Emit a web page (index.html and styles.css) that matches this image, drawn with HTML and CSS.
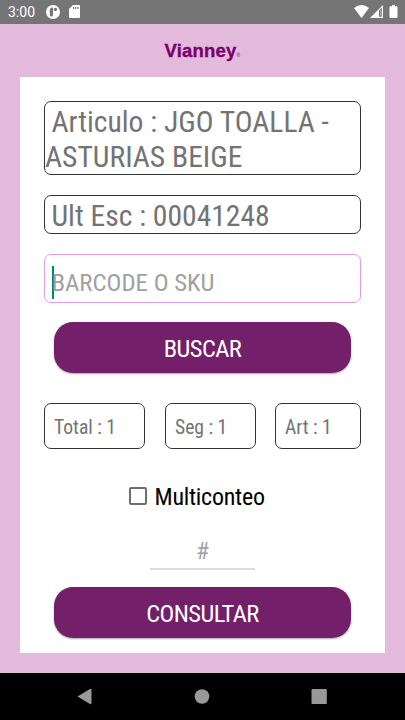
FILE: index.html
```
<!DOCTYPE html>
<html lang="es">
<head>
<meta charset="utf-8">
<meta name="viewport" content="width=device-width">
<title>Vianney</title>
<link rel="stylesheet" href="styles.css">
</head>
<body>
<header class="status">
  <span class="clock">3:00</span>
  <svg class="app" viewBox="0 0 14 14"><circle cx="7" cy="7" r="7" fill="#fff"/><path d="M7 2.500H5.700Q3.800 3 3.800 5v5q.2 1.600 1.600 1.600T7 10z" fill="#757575"/><circle cx="9.400" cy="4.400" r="1.700" fill="#757575"/></svg>
  <svg class="sd" viewBox="0 0 11 13"><path d="M4 0h6q1 0 1 1v11q0 1-1 1H1q-1 0-1-1V4z" fill="#fff"/><path d="M4 2h1.200v2H4zM6.200 2h1.200v2H6.200zM8.400 2h1.200v2H8.400z" fill="#757575"/></svg>
  <span class="space"></span>
  <svg class="wifi" viewBox="0 0 15 13"><path d="M0 3Q7.500-3 15 3L7.500 13z" fill="#fff"/></svg>
  <svg class="signal" viewBox="0 0 13 13"><path d="M0 13L13 0v13z" fill="#fff"/><path d="M9 5.500L11.800 2.800V11.800H9z" fill="#757575"/><path d="M10.200 5h1v6h-1z" fill="#aaa"/></svg>
  <svg class="battery" viewBox="0 0 8 13"><path d="M2.500 0h3v1.300H7q1 0 1 1V12q0 1-1 1H1q-1 0-1-1V2.300q0-1 1-1h1.500z" fill="#fff"/></svg>
</header>
<main class="screen">
  <div class="brand">Vianney<span class="mark">®</span></div>
  <section class="card">
    <div class="box article"><span class="t"><span class="lead">Articulo : JGO TOALLA -</span><br>ASTURIAS BEIGE</span></div>
    <div class="box last"><span class="t lead">Ult Esc : 00041248</span></div>
    <div class="box barcode"><span class="caret"></span><span class="t">BARCODE O SKU</span></div>
    <div class="button"><span class="t">BUSCAR</span></div>
    <div class="counts">
      <div class="box total"><span class="t">Total : 1</span></div>
      <div class="box segment"><span class="t">Seg : 1</span></div>
      <div class="box items"><span class="t">Art : 1</span></div>
    </div>
    <div class="multi"><span class="check"></span><span class="t">Multiconteo</span></div>
    <div class="number"><span class="t">#</span></div>
    <div class="button query"><span class="t">CONSULTAR</span></div>
  </section>
</main>
<nav class="nav">
  <svg viewBox="0 0 18 18"><path d="M1.500 8.500L14 1q1.500-.6 1.500 1v13q0 1.600-1.500 1z" fill="#999"/></svg>
  <svg viewBox="0 0 18 18"><circle cx="9" cy="8.500" r="7.300" fill="#999"/></svg>
  <svg viewBox="0 0 18 18"><rect x="1.500" y="1" width="15.300" height="15" rx="1" fill="#999"/></svg>
</nav>
</body>
</html>
```
FILE: styles.css
```
* { box-sizing: border-box; }
body {
  margin: 0;
  width: 405px;
  height: 720px;
  overflow: hidden;
  display: flex;
  flex-direction: column;
  font-family: "Roboto Condensed", Roboto, sans-serif;
  font-stretch: 75%;
  color: #737373;
}
.status {
  height: 24px;
  background: #757575;
  display: flex;
  align-items: flex-start;
  padding: 5px 7px 0 8px;
  color: #fff;
}
.status svg { display: block; flex: none; }
.clock { font: 14px/15px Roboto, sans-serif; width: 38px; }
.app { width: 14px; height: 14px; margin-right: 9px; }
.sd { width: 11px; height: 13px; }
.space { flex: 1; }
.wifi { width: 15px; height: 13px; margin-right: 1px; }
.signal { width: 13px; height: 13px; margin-right: 6px; }
.battery { width: 9px; height: 13px; }
.screen {
  height: 649px;
  background: #e3b9dc;
  padding: 0 20px;
}
.brand {
  height: 52.500px;
  padding-top: 16px;
  text-align: center;
  font: bold 18.500px/21px "Liberation Sans", Arial, sans-serif;
  letter-spacing: .2px;
  color: #7a006b;
  -webkit-text-stroke: .35px #7a006b;
}
.mark { font-size: 5px; font-weight: normal; -webkit-text-stroke: 0; }
.card {
  height: 576.500px;
  background: #fff;
  padding: 24.500px 24px 0;
}
.t { display: block; white-space: nowrap; }
.box { border: 1px solid #333; border-radius: 7px; }
.article {
  height: 74px;
  font-size: 29.600px;
  line-height: 34.500px;
  padding-top: 3px;
}
.lead { padding-left: 6.500px; }
.last {
  height: 39px;
  margin-top: 20px;
  font-size: 29.600px;
  line-height: 38px;
  padding-top: 1px;
}
.barcode {
  height: 49px;
  margin-top: 20px;
  padding: 11px 0 0 6.500px;
  border-color: #df9de8;
  color: #a0a0a0;
  font-size: 24.800px;
  line-height: 34px;
  display: flex;
}
.caret { width: 2px; height: 33px; margin-right: -2px; background: #008577; }
.button {
  height: 51px;
  margin: 19px 10px 0;
  border-radius: 19px;
  background: #731f6a;
  color: #fff;
  display: flex;
  justify-content: center;
  font-size: 24.500px;
  letter-spacing: -.55px;
  line-height: 53px;
  box-shadow: 0 1px 2px rgba(0, 0, 0, .35);
}
.counts {
  display: flex;
  margin-top: 30px;
  font-size: 19.600px;
  line-height: 47px;
}
.counts .box { height: 46px; padding-left: 9px; }
.total { width: 101px; margin-right: 20px; }
.segment { width: 91px; margin-right: 19px; }
.items { width: 86px; }
.multi {
  display: flex;
  align-items: center;
  height: 30px;
  margin: 33px 0 0 85px;
  color: #000;
  font-size: 24px;
  letter-spacing: -.25px;
  line-height: 30px;
}
.check {
  width: 18px;
  height: 18px;
  margin: -2px 7.500px 0 0;
  border: 2px solid #6e6e6e;
  border-radius: 2px;
}
.number {
  width: 105px;
  height: 34px;
  margin: 24px auto 0;
  border-bottom: 2px solid #dcdcdc;
  display: flex;
  justify-content: center;
  color: #a0a0a0;
  font-size: 24px;
  line-height: 30px;
}
.query { margin-top: 17px; }
.nav {
  height: 47px;
  background: #000;
  display: flex;
  justify-content: space-between;
  padding: 15px 77px 0 76px;
}
.nav svg { width: 18px; height: 18px; display: block; }
```
